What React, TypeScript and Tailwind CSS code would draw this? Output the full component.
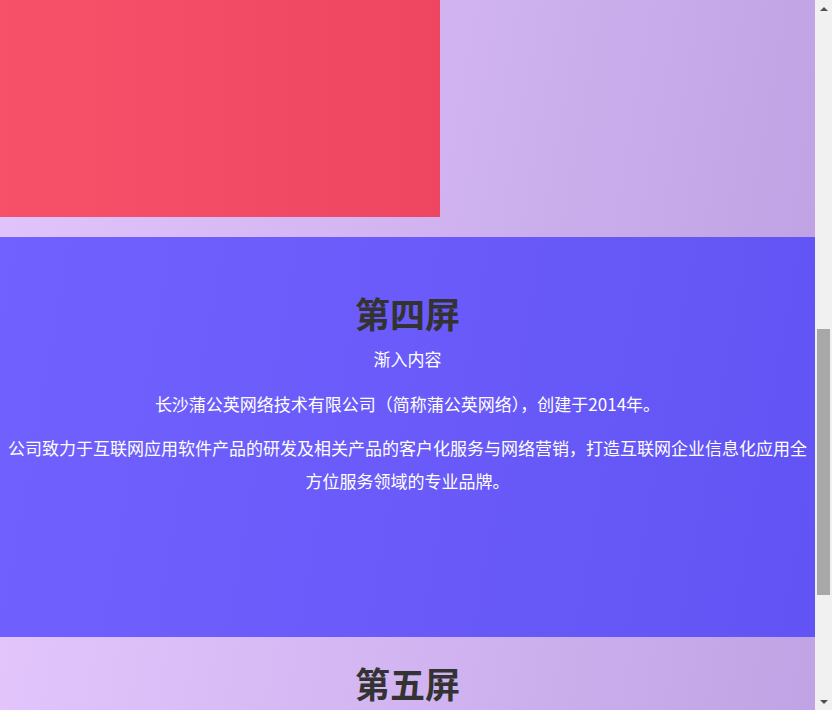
import React from 'react'

const font = 'font-["Microsoft_YaHei","Noto_Sans_CJK_SC",sans-serif]'

const lavender = 'bg-[linear-gradient(100deg,#e3c5fc_0%,#d3b6f2_45%,#bfa3e4_100%)]'

/** 模拟浏览器滚动条 */
const FakeScrollbar: React.FC = () => (
	<div className="flex w-[17px] shrink-0 flex-col items-center bg-[#f1f1f1]">
		<div className="flex h-[17px] w-full items-center justify-center">
			<div className="h-0 w-0 border-x-[4px] border-b-[4px] border-x-transparent border-b-[#505050]" />
		</div>
		<div className="h-[312px]" />
		<div className="h-[266px] w-[13px] bg-[#a8a8a8]" />
		<div className="flex-1" />
		<div className="flex h-[17px] w-full items-center justify-center">
			<div className="h-0 w-0 border-x-[4px] border-t-[4px] border-x-transparent border-t-[#505050]" />
		</div>
	</div>
)

export default function App() {
	return (
		<div className={`flex h-[710px] w-[832px] overflow-hidden ${font}`}>
			<div className="flex min-w-0 flex-1 flex-col overflow-hidden">
				{/* 第三屏（尾部） */}
				<section className={`h-[237px] shrink-0 ${lavender}`}>
					<div className="h-[217px] w-[440px] bg-[linear-gradient(to_right,#f7516a,#ee4661)]" />
				</section>

				{/* 第四屏 */}
				<section className="flex h-[400px] shrink-0 flex-col items-center bg-[linear-gradient(100deg,#7162ff,#6253f4)] pt-[52px] text-center text-[17px] text-white">
					<h2 className="text-[35px] font-bold leading-[48px] text-[#333]">第四屏</h2>
					<p className="mt-[6px] leading-[32px]">渐入内容</p>
					<p className="mt-[13px] leading-[32px]">
						长沙蒲公英网络技术有限公司（简称蒲公英网络），创建于2014年。
					</p>
					<p className="mt-[12px] leading-[32.5px]">
						公司致力于互联网应用软件产品的研发及相关产品的客户化服务与网络营销，打造互联网企业信息化应用全方位服务领域的专业品牌。
					</p>
				</section>

				{/* 第五屏 */}
				<section className={`flex flex-1 flex-col items-center pt-[22px] ${lavender}`}>
					<h2 className="text-[35px] font-bold leading-[48px] text-[#333]">第五屏</h2>
				</section>
			</div>
			<FakeScrollbar />
		</div>
	)
}
